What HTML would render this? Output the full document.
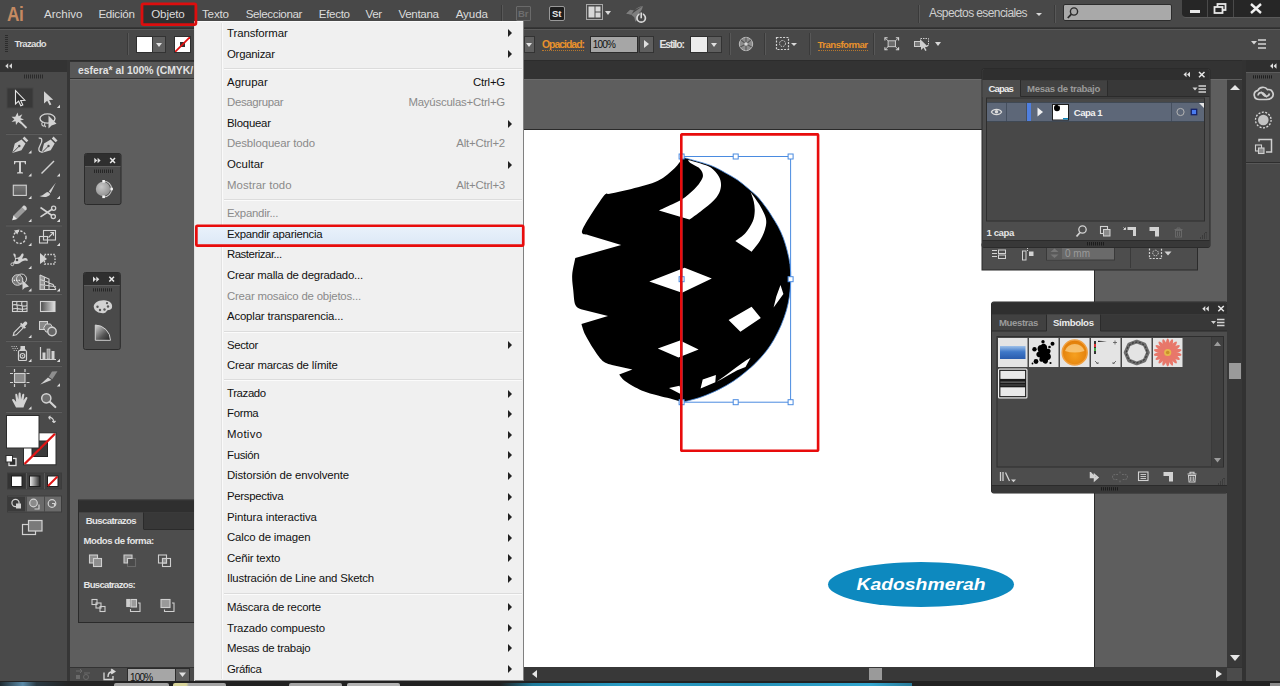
<!DOCTYPE html>
<html lang="es">
<head>
<meta charset="utf-8">
<title>Adobe Illustrator - Objeto &gt; Expandir apariencia</title>
<style>
html,body{margin:0;padding:0;}
body{width:1280px;height:686px;overflow:hidden;background:#5e5e5e;position:relative;font-family:"Liberation Sans",sans-serif;font-size:11px;color:#e6e6e6;}
.a{position:absolute;}
.t{position:absolute;white-space:nowrap;line-height:14px;}
/* bars */
#menubar{left:0;top:0;width:1280px;height:27px;background:#484848;}
#ctrlbar{left:0;top:29px;width:1280px;height:30.5px;background:#484848;border-top:1px solid #5a5a5a;box-sizing:border-box;}
#darkline1{left:0;top:27px;width:1280px;height:2px;background:linear-gradient(#3a3a3a,#2c2c2c);}
#darkline2{left:0;top:59.5px;width:1280px;height:2.5px;background:#2c2c2c;}
#tabstrip{left:70px;top:61px;width:1175px;height:18px;background:#333;}
#doctab{left:70px;top:62px;width:125px;height:16px;background:#575757;}
#canvas{left:70px;top:79px;width:1157px;height:588px;box-shadow:inset 0 1px 0 #6a6a6a;background:#5e5e5e;}
#artboard{left:520px;top:130px;width:574px;height:537px;background:#ffffff;box-shadow:0 -1px 0 #2a2a2a,1px 0 0 #2a2a2a;}
#tools{left:0;top:60px;width:67px;height:626px;background:#4a4a4a;}
#toolshead{left:0;top:60px;width:67px;height:12px;background:#333;}
#toolgap{left:67px;top:60px;width:3px;height:626px;background:#363636;}
.mb{color:#dcdcdc;font-size:11.6px;top:7px;}
/* menu */
#menu{left:194px;top:21px;width:330px;height:660px;background:#f0f0f0;box-shadow:inset -1px 0 0 #808080,inset 0 1px 0 #fbfbfb,inset 1px 0 0 #e4e4e4,inset 0 -1px 0 #8a8a8a;}
#menu .gut{left:27px;top:2px;width:1px;height:656px;background:#e2e2e2;border-right:1px solid #fafafa;}
.mi{position:absolute;left:33px;white-space:nowrap;color:#111;font-size:11.4px;line-height:14px;letter-spacing:-0.2px;}
.mi.d{color:#8a8a8a;}
.sc{position:absolute;right:19px;white-space:nowrap;color:#111;font-size:11.4px;line-height:14px;letter-spacing:-0.2px;}
.sc.d{color:#8a8a8a;}
.sep{position:absolute;left:30px;width:298px;height:1px;background:#dcdcdc;border-bottom:1px solid #fbfbfb;}
.arr{position:absolute;left:314px;width:0;height:0;border-left:4px solid #222;border-top:4px solid transparent;border-bottom:4px solid transparent;}
#hl{left:2px;width:327px;height:21px;background:linear-gradient(#eaf2fb,#dce8f6);border-radius:2px;}

.ddb{position:absolute;background:#5f5f5f;border:1px solid #333;box-sizing:border-box;}
.ddb:after{content:"";position:absolute;left:50%;top:50%;margin:-2px 0 0 -3.5px;border-top:4px solid #e0e0e0;border-left:3.5px solid transparent;border-right:3.5px solid transparent;}
.vsep{position:absolute;width:1px;background:#3a3a3a;border-right:1px solid #585858;}
.or{color:#e8922c;}
.dot{border-bottom:1px dotted #b9782e;}
.tri-d{position:absolute;width:0;height:0;border-top:4px solid #d8d8d8;border-left:3.5px solid transparent;border-right:3.5px solid transparent;}
</style>
</head>
<body>
<div class="a" id="canvas"></div>
<div class="a" id="artboard"></div>
<div class="a" id="menubar"></div>
<div class="a" id="darkline1"></div>
<div class="a" id="ctrlbar"></div>
<div class="a" id="darkline2"></div>
<div class="a" id="tabstrip"></div>
<div class="a" id="doctab"></div>
<div class="a" id="tools"></div>
<div class="a" id="toolshead"></div>
<div class="a" id="toolgap"></div>
<div class="a" style="left:1246px;top:60px;width:34px;height:626px;background:#484848;"></div>

<!--MENUBAR-->
<svg class="a" style="left:138px;top:0px" width="62" height="28"><rect x="4.00" y="3.90" width="53.90" height="20.70" rx="1.5" fill="#303030" stroke="none" stroke-width="2.8"/></svg>
<div class="t" style="left:7px;top:3px;font-size:20px;line-height:22px;font-weight:bold;color:#c58a62;letter-spacing:-0.5px;transform:scaleX(.86);transform-origin:0 0;">Ai</div>
<div class="t mb" style="left:44.0px;letter-spacing:-0.02px;">Archivo</div>
<div class="t mb" style="left:98.4px;letter-spacing:-0.26px;">Edición</div>
<div class="t mb" style="left:151.2px;letter-spacing:-0.11px;">Objeto</div>
<div class="t mb" style="left:202.0px;letter-spacing:-0.18px;">Texto</div>
<div class="t mb" style="left:245.7px;letter-spacing:-0.39px;">Seleccionar</div>
<div class="t mb" style="left:318.8px;letter-spacing:-0.33px;">Efecto</div>
<div class="t mb" style="left:365.5px;letter-spacing:-0.37px;">Ver</div>
<div class="t mb" style="left:398.4px;letter-spacing:-0.32px;">Ventana</div>
<div class="t mb" style="left:455.7px;letter-spacing:-0.11px;">Ayuda</div>
<div class="a" style="left:516px;top:6px;width:15px;height:15px;box-sizing:border-box;border:1px solid #6a6a6a;border-radius:1px;background:#4a4a4a;"></div>
<div class="t" style="left:518px;top:7px;font-size:9.5px;line-height:13px;font-weight:bold;color:#6e6e6e;">Br</div>
<div class="a" style="left:549px;top:6px;width:16px;height:15px;box-sizing:border-box;border:1px solid #9a9a9a;border-radius:2px;background:#1e1e1e;"></div>
<div class="t" style="left:552px;top:7px;font-size:9.5px;line-height:13px;font-weight:bold;color:#e8e8e8;">St</div>
<svg class="a" style="left:586px;top:4px" width="18" height="17" viewBox="0 0 18 17"><rect x=".5" y=".5" width="16" height="15" fill="#4a4a4a" stroke="#a8a8a8"/><rect x="2.5" y="2.5" width="6" height="11" fill="#d8d8d8"/><rect x="9.5" y="2.5" width="5" height="5" fill="#d8d8d8"/><rect x="9.5" y="8.5" width="5" height="5" fill="#d8d8d8"/></svg>
<div class="tri-d" style="left:605px;top:11px"></div>
<svg class="a" style="left:624px;top:2px" width="26" height="24" viewBox="624 2 26 24"><path d="M642.800 6 C639 6.300 634 9.500 631 14.500 L626.300 13.500 L630 10 L633 10.800 M631 14.500 L634.500 17.500 C639 14.500 642.300 10.500 642.800 6 Z" fill="#7e7e7e"/><path d="M626.300 13.800 L630.500 9.800 L633.500 10.600 L631 14.600 Z M634.300 17.300 L635.300 21.800 L638.500 18.500 L638 14.500 Z" fill="#7e7e7e"/><circle cx="641.200" cy="18" r="4.200" fill="#484848" stroke="#dadada" stroke-width="1.700"/><rect x="639.600" y="11.800" width="3.200" height="6.800" fill="#484848"/><rect x="640.400" y="12.500" width="1.600" height="5.800" fill="#dadada"/></svg>
<div class="vsep" style="left:501px;top:5px;height:18px"></div>
<div class="vsep" style="left:918px;top:5px;height:18px"></div>
<div class="t" style="left:929.0px;top:6px;font-size:12px;color:#cfcfcf;letter-spacing:-0.60px;">Aspectos esenciales</div>
<div class="tri-d" style="left:1036px;top:13px;border-top-width:3.5px;border-left-width:3px;border-right-width:3px;"></div>
<div class="vsep" style="left:1054px;top:5px;height:18px"></div>
<div class="a" style="left:1063px;top:4px;width:109px;height:17px;box-sizing:border-box;background:#a9a9a9;border:1px solid #2c2c2c;border-radius:2px;"></div>
<svg class="a" style="left:1066px;top:6px" width="14" height="14" viewBox="0 0 14 14"><circle cx="8" cy="5.5" r="3.6" fill="none" stroke="#2a2a2a" stroke-width="1.4"/><path d="M5.4 8.2 L1.8 12" stroke="#2a2a2a" stroke-width="1.8"/></svg>
<div class="a" style="left:1182px;top:0;width:98px;height:17px;background:#262626;border-radius:0 0 0 4px;border-bottom:1px solid #5a5a5a;"></div>
<div class="a" style="left:1207px;top:0;width:1px;height:17px;background:#4a4a4a;"></div>
<div class="a" style="left:1233px;top:0;width:1px;height:17px;background:#4a4a4a;"></div>
<div class="a" style="left:1190px;top:10px;width:10px;height:3px;background:#e8e8e8;"></div>
<svg class="a" style="left:1213px;top:2px" width="14" height="13" viewBox="0 0 14 13"><rect x="4.5" y="2" width="8" height="6" fill="none" stroke="#e8e8e8" stroke-width="1.8"/><rect x="1.5" y="5" width="8" height="6" fill="#262626" stroke="#e8e8e8" stroke-width="1.8"/></svg>
<svg class="a" style="left:1249px;top:3px" width="14" height="11" viewBox="0 0 14 11"><path d="M2 1 L12 10 M12 1 L2 10" stroke="#f0f0f0" stroke-width="2.4"/></svg>

<div class="t" style="left:78.0px;top:63.500px;font-size:10.400px;font-weight:bold;color:#e2e2e2;letter-spacing:-0.02px;">esfera* al 100% (CMYK/</div>
<!--CTRLBAR-->
<div class="a" style="left:5px;top:35px;width:3px;height:18px;background:repeating-linear-gradient(#2c2c2c 0 1px,transparent 1px 2px);"></div>
<div class="t" style="left:14.6px;top:37px;font-size:9.6px;font-weight:bold;color:#dedede;letter-spacing:-0.69px;">Trazado</div>
<div class="vsep" style="left:127px;top:33px;height:22px"></div>
<div class="a" style="left:136px;top:36px;width:17px;height:17px;box-sizing:border-box;background:#fff;border:1px solid #2f2f2f;"></div>
<div class="ddb" style="left:152px;top:36px;width:14px;height:17px;"></div>
<div class="a" style="left:174px;top:36px;width:17px;height:17px;box-sizing:border-box;background:#fff;border:1px solid #2f2f2f;overflow:hidden;"><svg width="15" height="15" viewBox="0 0 15 15" style="display:block"><rect x="5" y="5" width="5" height="5" fill="#333"/><path d="M0 15 L15 0" stroke="#e01010" stroke-width="1.8"/></svg></div>
<div class="ddb" style="left:524px;top:36px;width:11px;height:17px;"></div>
<div class="t or" style="left:542.0px;top:38px;font-size:10.4px;font-weight:bold;letter-spacing:-0.98px;"><span class="dot">Opacidad:</span></div>
<div class="a" style="left:590px;top:36px;width:48px;height:17px;box-sizing:border-box;background:#a6a6a6;border:1px solid #2c2c2c;"></div>
<div class="t" style="left:592.7px;top:38px;font-size:10px;color:#111;letter-spacing:-0.75px;">100%</div>
<div class="a" style="left:639px;top:36px;width:15px;height:17px;box-sizing:border-box;background:#5f5f5f;border:1px solid #333;"></div>
<div class="a" style="left:644px;top:40px;width:0;height:0;border-left:5px solid #e0e0e0;border-top:4.5px solid transparent;border-bottom:4.5px solid transparent;"></div>
<div class="t" style="left:659.4px;top:38px;font-size:10.4px;font-weight:bold;color:#e2e2e2;letter-spacing:-1.02px;">Estilo:</div>
<div class="a" style="left:690px;top:36px;width:18px;height:17px;box-sizing:border-box;background:#ececec;border:1px solid #2f2f2f;"></div>
<div class="ddb" style="left:707px;top:36px;width:15px;height:17px;"></div>
<div class="vsep" style="left:729px;top:33px;height:22px"></div>
<svg class="a" style="left:738px;top:36px" width="16" height="16" viewBox="0 0 16 16"><circle cx="8" cy="8" r="6.7" fill="#8c8c8c" stroke="#bdbdbd" stroke-width="1"/><path d="M8 8 L8 1.5 M8 8 L2.3 11 M8 8 L13.7 11 M8 8 L3 4 M8 8 L13 4 M8 8 L8 14.5" stroke="#565656" stroke-width="1.1"/><circle cx="8" cy="8" r="1.8" fill="#d8d8d8"/></svg>
<div class="vsep" style="left:764px;top:33px;height:22px"></div>
<svg class="a" style="left:775px;top:36px" width="16" height="16" viewBox="0 0 16 16"><rect x="1.5" y="1.5" width="12" height="12" fill="none" stroke="#d4d4d4" stroke-width="1.2" stroke-dasharray="2 1.3"/><circle cx="7.5" cy="7.5" r="3" fill="none" stroke="#d4d4d4" stroke-width="1" stroke-dasharray="1.5 1"/></svg>
<div class="tri-d" style="left:791px;top:43px;border-top-width:3.5px;border-left-width:3.5px;border-right-width:3.5px;"></div>
<div class="vsep" style="left:809px;top:33px;height:22px"></div>
<div class="t or" style="left:817.6px;top:38px;font-size:9.6px;font-weight:bold;letter-spacing:-0.55px;"><span class="dot">Transformar</span></div>
<div class="vsep" style="left:873px;top:33px;height:22px"></div>
<svg class="a" style="left:884px;top:37px" width="15.500" height="13.500" viewBox="0 0 17 16" preserveAspectRatio="none"><rect x="4.5" y="4.5" width="8" height="7" fill="#6a6a6a" stroke="#d8d8d8" stroke-width="1"/><path d="M1 4 V1 H4 M13 1 H16 V4 M16 12 V15 H13 M4 15 H1 V12" fill="none" stroke="#d8d8d8" stroke-width="1.2"/><path d="M1.5 1.5 L4.5 4.5 M15.5 1.5 L12.5 4.5 M15.5 14.5 L12.5 11.5 M1.5 14.5 L4.5 11.5" stroke="#d8d8d8" stroke-width="1"/></svg>
<svg class="a" style="left:913px;top:36px" width="17" height="16" viewBox="0 0 17 16"><rect x="1.5" y="5.5" width="6" height="5" fill="#777" stroke="#cfcfcf"/><rect x="7.500" y="2.500" width="8" height="7" fill="none" stroke="#cfcfcf" stroke-dasharray="1.5 1"/><path d="M8 4 L8 14 L10.5 11.8 L12.3 15 L13.6 14.3 L11.9 11.2 L15 10.8 Z" fill="#cfcfcf"/></svg>
<div class="tri-d" style="left:935px;top:42px"></div>
<svg class="a" style="left:1251px;top:38px" width="16" height="12" viewBox="0 0 16 12"><path d="M0 3 L6 3 L3 6.500 Z" fill="#d4d4d4"/><path d="M7 2 H15 M7 6 H15 M7 10 H15" stroke="#d4d4d4" stroke-width="1.6"/></svg>

<!--TOOLS_S-->
<svg class="a" style="left:0;top:60px" width="67" height="490" viewBox="0 60 67 490">
<defs><linearGradient id="gh" x1="0" x2="1" y1="0" y2="0"><stop offset="0" stop-color="#4a4a4a"/><stop offset="1" stop-color="#e4e4e4"/></linearGradient>
<linearGradient id="gh2" x1="0" x2="1" y1="0" y2="0"><stop offset="0" stop-color="#f4f4f4"/><stop offset="1" stop-color="#2a2a2a"/></linearGradient>
<linearGradient id="gv" x1="0" x2="0" y1="0" y2="1"><stop offset="0" stop-color="#777"/><stop offset="1" stop-color="#5c5c5c"/></linearGradient></defs>
<path d="M8.2 63.2 L5.2 66 L8.2 68.800 Z M12 63.2 L9 66 L12 68.800 Z" fill="#d6d6d6"/>
<path d="M24.500 74.500 V78.500 M26.500 74.500 V78.500 M28.500 74.500 V78.500 M30.500 74.500 V78.500 M32.500 74.500 V78.500 M34.500 74.500 V78.500 M36.500 74.500 V78.500 M38.500 74.500 V78.500 M40.500 74.500 V78.500 M42.500 74.500 V78.500" stroke="#2a2a2a" stroke-width="1"/>
<rect x="7" y="88" width="26" height="20" fill="#383838" stroke="#454545" stroke-width="1"/>
<!-- selection -->
<path d="M15.500 90.500 L15.500 104 L18.600 101.200 L20.800 105.800 L22.800 104.900 L20.700 100.400 L24.800 100.200 Z" fill="#2e2e2e" stroke="#e6e6e6" stroke-width="1.1" stroke-linejoin="miter"/>
<!-- direct -->
<path d="M44 91.200 L44 103.500 L47.200 100.800 L49.600 105.300 L51.400 104.400 L49.100 99.900 L53.200 99.800 Z" fill="#d2d2d2"/>
<path d="M60 108 L60 104.8 L56.8 108 Z" fill="#dcdcdc"/>
<!-- wand -->
<path d="M17.500 112.500 L18.600 116.300 L22.300 114.300 L20.500 118 L24 119.500 L20.300 120.500 L21.500 124 L18.200 122 L16 125 L15.600 121.300 L11.600 122 L14.400 119.300 L11.500 116.800 L15.300 116.800 Z" fill="#d2d2d2"/>
<path d="M20 121.500 L26.500 128" stroke="#d2d2d2" stroke-width="1.8"/>
<!-- lasso -->
<ellipse cx="47.500" cy="118.500" rx="7.500" ry="4.600" fill="none" stroke="#d2d2d2" stroke-width="1.400"/>
<path d="M42.500 122 C41 124 42 126.500 44.500 126 M45 123 C44 124.500 45 126.500 46 127" fill="none" stroke="#d2d2d2" stroke-width="1.100"/>
<path d="M48.500 115.500 L48.500 128.500 L51.600 125.600 L56.500 123.800 Z" fill="#d2d2d2"/>
<path d="M6 133.500 H62" stroke="#474747" stroke-width="1"/><path d="M6 134.500 H62" stroke="#5c5c5c" stroke-width="1"/>
<!-- pen -->
<g fill="#d2d2d2"><path d="M12.300 153 L14.800 143.500 L21.500 139.500 L25.500 143.500 L21.500 150.200 Z"/><path d="M22.600 138.400 L24.400 136.600 L28.300 140.500 L26.500 142.300 Z"/></g>
<path d="M12.800 152.500 L19 146.300" stroke="#4a4a4a" stroke-width="1"/><circle cx="19.300" cy="146" r="1.200" fill="#4a4a4a"/>
<path d="M31.5 153.5 L31.5 150.3 L28.3 153.5 Z" fill="#dcdcdc"/>
<!-- curvature pen -->
<g fill="#d2d2d2"><path d="M41.500 153 L44 143.500 L50.700 139.500 L54.700 143.500 L50.700 150.200 Z"/><path d="M51.800 138.400 L53.600 136.600 L57.500 140.500 L55.700 142.300 Z"/></g>
<path d="M42 152.500 L48.200 146.300" stroke="#4a4a4a" stroke-width="1"/><circle cx="48.500" cy="146" r="1.200" fill="#4a4a4a"/>
<path d="M38.700 138.200 C42.500 137.500 42.500 141 40.500 144.500 C38 149 38 152.500 42.500 152" fill="none" stroke="#d2d2d2" stroke-width="1.300"/>
<!-- T -->
<path d="M14 161 H26 V164.300 H25 L24.400 162.300 H21 V172 L23 172.600 V173.600 H17 V172.600 L19 172 V162.300 H15.600 L15 164.300 H14 Z" fill="#d2d2d2"/>
<path d="M31.5 176.5 L31.5 173.3 L28.3 176.5 Z" fill="#dcdcdc"/>
<path d="M41.500 173.500 L54 161" stroke="#d2d2d2" stroke-width="1.500"/>
<path d="M60 176.5 L60 173.3 L56.8 176.5 Z" fill="#dcdcdc"/>
<!-- rect -->
<rect x="13.300" y="185.200" width="13" height="10.200" fill="url(#gv)" stroke="#d2d2d2" stroke-width="1.100"/>
<path d="M31.5 199 L31.5 195.8 L28.3 199 Z" fill="#dcdcdc"/>
<!-- brush -->
<path d="M55.800 182.800 L48.800 191.500 L50.600 193 Z" fill="#d2d2d2"/>
<path d="M48 192 C45 192 44.500 195.500 39.500 196 C43 197.800 48.500 197.500 50.300 194 Z" fill="#d2d2d2"/>
<path d="M60 199 L60 195.8 L56.8 199 Z" fill="#dcdcdc"/>
<!-- pencil -->
<path d="M12.300 220.300 L13.500 215.600 L21.800 207.300 L25.300 210.800 L17 219.100 Z" fill="#9a9a9a"/>
<path d="M21.800 207.300 L23.300 205.800 C24.500 204.800 27.500 207.600 26.600 209.200 L25.300 210.800 Z" fill="#d2d2d2"/>
<path d="M12.300 220.300 L13.500 215.600 L17 219.100 Z" fill="#e8e8e8"/>
<path d="M31.5 222 L31.5 218.8 L28.3 222 Z" fill="#dcdcdc"/>
<!-- scissors -->
<path d="M40.500 207.500 L52 215.500 M40.500 216.800 L52.500 209" stroke="#d2d2d2" stroke-width="1.600"/>
<circle cx="53.600" cy="208.300" r="2.100" fill="none" stroke="#d2d2d2" stroke-width="1.300"/><circle cx="53.300" cy="216.600" r="2.100" fill="none" stroke="#d2d2d2" stroke-width="1.300"/>
<path d="M60 222 L60 218.8 L56.8 222 Z" fill="#dcdcdc"/>
<path d="M6 225 H62" stroke="#474747" stroke-width="1"/><path d="M6 226 H62" stroke="#5c5c5c" stroke-width="1"/>
<!-- rotate -->
<circle cx="19.700" cy="237.200" r="6.300" fill="none" stroke="#d2d2d2" stroke-width="1.400" stroke-dasharray="2.200 1.500"/>
<path d="M14 230.500 L19.500 229.500 L17.300 234.500 Z" fill="#d2d2d2"/>
<path d="M31.5 246 L31.5 242.8 L28.3 246 Z" fill="#dcdcdc"/>
<!-- scale -->
<rect x="43.500" y="230.500" width="12" height="9.500" fill="none" stroke="#d2d2d2" stroke-width="1.100"/>
<rect x="39.500" y="236.500" width="8" height="6.500" fill="none" stroke="#d2d2d2" stroke-width="1.100"/>
<path d="M48.500 237.500 L53.500 232.500 M50.300 232.500 H53.500 V235.700" stroke="#d2d2d2" stroke-width="1.100" fill="none"/>
<path d="M60 246 L60 242.8 L56.8 246 Z" fill="#dcdcdc"/>
<!-- width/warp -->
<path d="M13.500 253.500 C16 253 16 256 15.500 258 C18 258 20 257 21 255 C22 253 24 253 23.500 255.500 C23 257 22 258 22.500 259 C25 257 28.500 258 27.500 261 C25 259.500 22 261 20 263 C17.500 265 14 264 13 262.500 C15 261 15.500 259 14.500 257 C14 255.500 13 255 13.500 253.500 Z" fill="#d2d2d2"/>
<circle cx="12.300" cy="264.300" r="1.400" fill="none" stroke="#d2d2d2" stroke-width="0.900"/><circle cx="17" cy="260" r="1.300" fill="#4a4a4a"/>
<path d="M31.5 269 L31.5 265.8 L28.3 269 Z" fill="#dcdcdc"/>
<!-- free transform -->
<path d="M40 253 L40 264 L47 259 Z" fill="#d2d2d2"/>
<rect x="44.500" y="254.500" width="10.500" height="9.500" fill="none" stroke="#d2d2d2" stroke-width="1.300" stroke-dasharray="1.600 1.300"/>
<!-- shape builder -->
<circle cx="17.500" cy="280" r="5.300" fill="#7a7a7a" stroke="#d2d2d2" stroke-width="1"/><circle cx="21.500" cy="279" r="5" fill="none" stroke="#d2d2d2" stroke-width="1"/>
<path d="M13.800 280.300 h1.200 m1.200 0 h1.200 m1.200 0 h1.200" stroke="#efefef" stroke-width="1.300"/>
<path d="M22.500 280.500 L22.500 290 L24.800 287.800 L29 286.500 Z" fill="#d2d2d2"/>
<path d="M31.5 291.5 L31.5 288.3 L28.3 291.5 Z" fill="#dcdcdc"/>
<!-- perspective grid -->
<path d="M40 275 L40 289.500 L56 289.500 M44.500 277 V289.500 M49 279 V289.500 M40 279.500 L49 282.500 M40 284.500 L56 286.800 M40 275 L49 279 V283 L53 284.500 L56 289.500" fill="none" stroke="#d2d2d2" stroke-width="1.100"/>
<path d="M40 275 L44.500 277 V289 H40 Z" fill="#d2d2d2" opacity=".55"/>
<path d="M60 291.5 L60 288.3 L56.8 291.5 Z" fill="#dcdcdc"/>
<path d="M6 293.500 H62" stroke="#474747" stroke-width="1"/><path d="M6 294.500 H62" stroke="#5c5c5c" stroke-width="1"/>
<!-- mesh -->
<rect x="12.500" y="301.500" width="14.500" height="10" fill="#4a4a4a" stroke="#d2d2d2" stroke-width="1.100"/>
<path d="M12.500 305 C17 303 22 308 27 305.500 M12.500 309 C17 307 21 311 27 308.500 M17 301.500 C15.500 305 19 308 17 311.500 M22 301.500 C20.500 305 24 308 22.300 311.500" fill="none" stroke="#d2d2d2" stroke-width="1.100"/>
<!-- gradient -->
<rect x="40.500" y="301.500" width="14.500" height="10" fill="url(#gh)" stroke="#d2d2d2" stroke-width="1.100"/>
<!-- eyedropper -->
<path d="M13.300 335.500 L14 332.500 L21 325.500 L23.300 327.800 L16.300 334.800 Z" fill="none" stroke="#d2d2d2" stroke-width="1.200"/>
<path d="M20 324 L24.800 328.800 L26 327.600 L24.800 326.400 L27 324.200 C28.200 322.800 26 320.600 24.600 321.800 L22.400 324 L21.200 322.800 Z" fill="#d2d2d2"/>
<path d="M31.5 338 L31.5 334.8 L28.3 338 Z" fill="#dcdcdc"/>
<!-- blend -->
<rect x="39.500" y="321.500" width="8" height="8" fill="#8a8a8a" stroke="#d2d2d2" stroke-width="1"/>
<path d="M46 324 L50.500 324 L53 328 L50.500 332 L46 332 L43.600 328 Z" fill="#777" stroke="#d2d2d2" stroke-width="1"/>
<circle cx="52" cy="331.500" r="4.200" fill="#666" stroke="#d2d2d2" stroke-width="1.400"/>
<path d="M6 340.500 H62" stroke="#474747" stroke-width="1"/><path d="M6 341.500 H62" stroke="#5c5c5c" stroke-width="1"/>
<!-- spray -->
<rect x="18.500" y="350.500" width="8" height="10" rx="1" fill="none" stroke="#d2d2d2" stroke-width="1.200"/>
<rect x="20.500" y="346" width="4.500" height="3.500" fill="#d2d2d2"/><path d="M19.500 350 L21 348.500 H24.500 L26 350 Z" fill="#d2d2d2"/>
<circle cx="22.500" cy="355.800" r="2.300" fill="none" stroke="#d2d2d2" stroke-width="1.100"/><circle cx="22.500" cy="355.800" r="0.800" fill="#d2d2d2"/>
<path d="M11.500 346.500 h1 m1.200 0 h1 m1.200 0 h1 M12.500 348.500 h1 m1.200 0 h1 m1.200 0 h1 M13.700 350.500 h1 m1.200 0 h1" stroke="#d2d2d2" stroke-width="0.900"/>
<path d="M31.5 362 L31.5 358.8 L28.3 362 Z" fill="#dcdcdc"/>
<!-- graph -->
<path d="M40.500 347 V359.500 H56" fill="none" stroke="#d2d2d2" stroke-width="1.200"/>
<rect x="42.500" y="352.500" width="3" height="6.500" fill="#d2d2d2"/><rect x="47" y="349" width="3" height="10" fill="#9a9a9a" stroke="#d2d2d2" stroke-width=".6"/><rect x="51.500" y="351" width="3" height="8" fill="#d2d2d2"/>
<path d="M60 362 L60 358.8 L56.8 362 Z" fill="#dcdcdc"/>
<path d="M6 365.500 H62" stroke="#474747" stroke-width="1"/><path d="M6 366.500 H62" stroke="#5c5c5c" stroke-width="1"/>
<!-- artboard -->
<rect x="14.500" y="373.500" width="10.500" height="9" fill="#8a8a8a" stroke="#d2d2d2" stroke-width="1.100"/>
<path d="M14.500 369 V372 M25 369 V372 M14.500 384 V387 M25 384 V387 M10 373.500 H13 M10 382.500 H13 M26.500 373.500 H29.500 M26.500 382.500 H29.500" stroke="#d2d2d2" stroke-width="1.200"/>
<!-- slice -->
<path d="M40.300 384.500 L48 377.500 L51.500 380 Z" fill="#d2d2d2"/><path d="M48.800 376.800 L52 371.500 L57.500 371.300 L52.300 379.300 Z" fill="#8e8e8e"/>
<path d="M60 386.5 L60 383.3 L56.8 386.5 Z" fill="#dcdcdc"/>
<!-- hand -->
<path d="M16 407.500 L12.300 400.500 C11.600 399 13.300 398.300 14.200 399.500 L16.200 402 L15.300 395 C15.100 393.500 17 393.300 17.300 394.700 L18.300 399.500 L18.600 393.500 C18.700 392 20.600 392 20.700 393.500 L21 399.500 L22.300 394.500 C22.700 393.100 24.500 393.500 24.300 395 L23.500 400.500 L25.500 397.500 C26.400 396.300 27.900 397.200 27.300 398.500 L24.500 404.500 L23.500 407.500 Z" fill="#d2d2d2"/>
<path d="M31.5 409.5 L31.5 406.3 L28.3 409.5 Z" fill="#dcdcdc"/>
<!-- zoom -->
<circle cx="46.300" cy="398.300" r="4.600" fill="#6e6e6e" stroke="#d2d2d2" stroke-width="1.500"/><path d="M49.800 401.800 L55.300 407" stroke="#d2d2d2" stroke-width="2.200" stroke-linecap="round"/>
<path d="M6 411.500 H62" stroke="#474747" stroke-width="1"/><path d="M6 412.500 H62" stroke="#5c5c5c" stroke-width="1"/>
<!-- fill/stroke -->
<rect x="23.500" y="432.800" width="32.500" height="32" fill="#fff" stroke="#2c2c2c" stroke-width="1"/>
<rect x="32" y="441" width="15.500" height="15.500" fill="#3a3a3a" stroke="#222" stroke-width="1"/>
<path d="M24.500 464 L55 433.800" stroke="#e01515" stroke-width="2.300"/>
<rect x="6.500" y="415.500" width="32.500" height="32.500" fill="#fff" stroke="#2c2c2c" stroke-width="1"/>
<path d="M48.500 417.500 C51.500 417 54 419 54 422.500 M48.500 417.500 L50.500 416 M48.500 417.500 L50.300 419.500 M54 422.500 L52.300 421 M54 422.500 L55.600 421" fill="none" stroke="#d2d2d2" stroke-width="1.100"/>
<rect x="9" y="458.500" width="7" height="7" fill="#2c2c2c" stroke="#e0e0e0" stroke-width="1.300"/><rect x="6" y="455.500" width="6.500" height="6.500" fill="#fff" stroke="#2c2c2c" stroke-width="1"/>
<!-- color buttons -->
<rect x="7.500" y="473" width="54" height="16" fill="#404040" stroke="#3c3c3c"/>
<rect x="8" y="473.500" width="17.500" height="15" fill="#333"/>
<rect x="26" y="473" width="1" height="16" fill="#585858"/><rect x="44" y="473" width="1" height="16" fill="#585858"/>
<rect x="11.500" y="476" width="10.500" height="10.500" fill="#fff" stroke="#1e1e1e"/>
<rect x="29.500" y="476" width="10.500" height="10.500" fill="url(#gh2)" stroke="#1e1e1e"/>
<rect x="47.500" y="476" width="10.500" height="10.500" fill="#fff" stroke="#1e1e1e"/><path d="M48 486 L57.500 476.500" stroke="#e01515" stroke-width="2"/>
<!-- draw mode -->
<rect x="7.500" y="496" width="54" height="16" fill="#6a6a6a" stroke="#3c3c3c"/>
<rect x="8" y="496.500" width="17.500" height="15" fill="#3a3a3a"/>
<rect x="26" y="496" width="1" height="16" fill="#4a4a4a"/><rect x="44" y="496" width="1" height="16" fill="#4a4a4a"/>
<circle cx="15.500" cy="503" r="3.600" fill="none" stroke="#d2d2d2" stroke-width="1.200"/><rect x="16" y="503.500" width="5" height="5" fill="#d2d2d2"/>
<circle cx="33.500" cy="503" r="3.800" fill="#8a8a8a" stroke="#d2d2d2" stroke-width="1.200"/><path d="M34.500 509 H39 V504.500" fill="none" stroke="#d2d2d2" stroke-width="1.200"/>
<circle cx="52" cy="503.500" r="3.800" fill="none" stroke="#d2d2d2" stroke-width="1.200"/><path d="M52 503.500 H54.500 V506" fill="none" stroke="#d2d2d2" stroke-width="1.200"/>
<!-- screen mode -->
<rect x="22.500" y="524.500" width="13" height="10" fill="#4a4a4a" stroke="#d2d2d2" stroke-width="1.200"/>
<rect x="28.500" y="520.500" width="13.500" height="10.500" fill="#7a7a7a" stroke="#d2d2d2" stroke-width="1.200"/>
</svg>
<!--TOOLS_E-->
<!--FLOAT_S-->
<svg class="a" style="left:70px;top:140px" width="130" height="500" viewBox="70 140 130 500">
<defs><radialGradient id="rg1" cx=".4" cy=".35" r=".7"><stop offset="0" stop-color="#c8c8c8"/><stop offset="1" stop-color="#8e8e8e"/></radialGradient>
<linearGradient id="qg" x1="0" x2="1" y1="0" y2="1"><stop offset="0" stop-color="#d8d8d8"/><stop offset=".6" stop-color="#555"/><stop offset="1" stop-color="#222"/></linearGradient></defs>
<!-- float 1 -->
<rect x="84.500" y="153.500" width="36.500" height="51" rx="2" fill="#4a4a4a" stroke="#2b2b2b"/>
<path d="M85 156 Q85 154 87 154 H118.500 Q120.500 154 120.500 156 V166 H85 Z" fill="#2f2f2f"/>
<path d="M85 166.500 H120.500" stroke="#5e5e5e"/>
<path d="M94.300 157.800 L97.300 160.500 L94.300 163.200 Z M97.600 157.800 L100.600 160.500 L97.600 163.200 Z" fill="#e0e0e0"/>
<path d="M110.200 158 L115 163 M115 158 L110.200 163" stroke="#e8e8e8" stroke-width="1.500"/>
<path d="M94.5 169.5 V173 M96.5 169.5 V173 M98.5 169.5 V173 M100.5 169.5 V173 M102.5 169.5 V173 M104.5 169.5 V173 M106.5 169.5 V173 M108.5 169.5 V173 M110.5 169.5 V173 M112.5 169.5 V173" stroke="#262626" stroke-width="1"/>
<circle cx="103" cy="189" r="7.200" fill="url(#rg1)"/>
<path d="M103.600 181 A8 8 0 0 1 103.600 197" fill="none" stroke="#c8c8c8" stroke-width="1.100"/>
<rect x="102.300" y="180" width="2.600" height="2.600" fill="#f4f4f4"/><rect x="110.300" y="187.700" width="2.600" height="2.600" fill="#f4f4f4"/><rect x="102.300" y="195.500" width="2.600" height="2.600" fill="#f4f4f4"/>
<!-- float 2 -->
<rect x="83.500" y="272.500" width="36.800" height="77" rx="2" fill="#4a4a4a" stroke="#2b2b2b"/>
<path d="M84 275 Q84 273 86 273 H117.800 Q119.800 273 119.800 275 V285 H84 Z" fill="#2f2f2f"/>
<path d="M84 285.500 H119.800" stroke="#5e5e5e"/>
<path d="M93 276.500 L96 279.200 L93 281.900 Z M96.300 276.500 L99.300 279.200 L96.300 281.900 Z" fill="#e0e0e0"/>
<path d="M109.300 276.800 L114 281.600 M114 276.800 L109.300 281.600" stroke="#e8e8e8" stroke-width="1.500"/>
<path d="M93.5 288.3 V291.5 M95.5 288.3 V291.5 M97.5 288.3 V291.5 M99.5 288.3 V291.5 M101.5 288.3 V291.5 M103.5 288.3 V291.5 M105.5 288.3 V291.5 M107.5 288.3 V291.5 M109.5 288.3 V291.5 M111.5 288.3 V291.5" stroke="#262626" stroke-width="1"/>
<path d="M94 308 C92.500 303.500 98 300 104 300.200 C109.500 300.400 113 303.500 112 307.500 C111.200 310.500 108.500 309.500 107.200 310.600 C106 311.600 106.500 313 103.500 313.200 C99 313.400 95 311.500 94 308 Z" fill="#d2d2d2"/>
<circle cx="97.500" cy="306.800" r="1.200" fill="#555"/><circle cx="100" cy="310" r="1.200" fill="#555"/><circle cx="104.500" cy="309.500" r="1.200" fill="#555"/><circle cx="108" cy="306.500" r="1.200" fill="#555"/><circle cx="107" cy="303.200" r="1.100" fill="#555"/>
<path d="M95.300 325 A15.500 15.500 0 0 1 110.500 340.300 L95.300 340.300 Z" fill="url(#qg)" stroke="#cfcfcf" stroke-width="1"/>
<!-- Buscatrazos -->
<rect x="78.500" y="500" width="125" height="122.500" fill="#4d4d4d" stroke="#2b2b2b"/>
<rect x="79" y="500.500" width="124" height="12" fill="#2f2f2f"/>
<rect x="79" y="512.500" width="124" height="16.500" fill="#383838"/>
<rect x="79" y="512.500" width="64.500" height="17" fill="#4d4d4d"/>
<path d="M143.500 512.500 V529" stroke="#2b2b2b"/><path d="M143.500 529.500 H203" stroke="#2b2b2b"/>
<!-- icons row 1 -->
<g stroke="#cfcfcf" stroke-width="1.100">
<rect x="89.500" y="555" width="8" height="8" fill="#8e8e8e"/><rect x="93.500" y="558.500" width="8" height="8" fill="#8e8e8e"/>
<rect x="127.500" y="558.500" width="8" height="8" fill="#4a4a4a" stroke="#6a6a6a"/><path d="M124 563 V555 H132 V558.500 H127.500 V563 Z" fill="#8e8e8e"/>
<rect x="158.500" y="555" width="8" height="8" fill="none"/><rect x="162.500" y="558.500" width="8" height="8" fill="none"/><rect x="162.500" y="558.500" width="4" height="4.500" fill="#8e8e8e"/>
</g>
<g stroke="#cfcfcf" stroke-width="1.100">
<rect x="92" y="599.500" width="5" height="5" fill="none"/><rect x="96" y="603" width="5" height="5" fill="none"/><rect x="100" y="606.500" width="5" height="5" fill="none"/>
<rect x="126.800" y="599.500" width="3" height="3" fill="#cfcfcf"/><rect x="126.800" y="603.500" width="3" height="3" fill="#cfcfcf"/><rect x="131" y="599.500" width="5.500" height="7.500" fill="#9a9a9a"/><path d="M138 603 H140 V611.500 H130.500 V609" fill="none"/>
<rect x="161" y="599.500" width="9" height="8" fill="#9a9a9a"/><path d="M172 603 H174 V611.500 H164.500 V609.500" fill="none"/>
</g>
</svg>
<div class="t" style="left:85.7px;top:514px;font-size:9.6px;font-weight:bold;color:#e4e4e4;letter-spacing:-0.61px;">Buscatrazos</div>
<div class="t" style="left:83.5px;top:534px;font-size:9.6px;font-weight:bold;color:#e4e4e4;letter-spacing:-0.47px;">Modos de forma:</div>
<div class="t" style="left:83.5px;top:578px;font-size:9.6px;font-weight:bold;color:#e4e4e4;letter-spacing:-0.73px;">Buscatrazos:</div>
<!--FLOAT_E-->
<!--ART_S-->
<svg class="a" style="left:560px;top:120px" width="470" height="500" viewBox="560 120 470 500">
<path d="M683.0 157.5 C684.2 157.8 685.8 158.1 690.4 159.4 C695.0 160.7 705.0 163.3 710.8 165.5 C716.6 167.7 720.7 170.3 725.1 172.7 C729.5 175.1 733.5 177.2 737.3 179.8 C741.0 182.4 744.2 185.1 747.6 188.0 C751.0 190.9 754.8 193.9 757.8 197.1 C760.8 200.3 763.5 204.1 765.9 207.3 C768.3 210.5 770.0 213.3 772.0 216.5 C774.0 219.7 776.3 223.1 778.2 226.7 C780.1 230.3 781.8 233.9 783.3 238.0 C784.8 242.1 786.2 246.8 787.3 251.2 C788.4 255.6 789.4 259.7 790.0 264.5 C790.6 269.3 790.9 274.7 790.8 280.0 C790.7 285.3 790.1 291.4 789.4 296.5 C788.6 301.6 787.7 306.1 786.3 310.8 C784.9 315.6 783.2 320.2 781.2 325.0 C779.2 329.8 776.5 335.0 774.0 339.4 C771.5 343.8 768.9 347.7 765.9 351.6 C762.9 355.5 759.1 359.5 755.7 362.9 C752.3 366.3 749.2 368.9 745.5 372.0 C741.8 375.1 737.7 378.3 733.3 381.2 C728.9 384.1 724.1 386.8 719.0 389.4 C713.9 391.9 707.5 394.7 702.7 396.5 C697.9 398.3 693.8 399.2 690.4 400.2 C687.0 401.1 683.6 401.9 682.2 402.2 C680.2 401.6 674.2 399.7 670.2 398.6 C666.2 397.5 662.8 396.9 658.0 395.5 C653.2 394.1 647.1 392.8 641.6 390.4 C636.1 388.0 629.0 383.8 625.3 381.2 C621.6 378.6 620.2 375.6 619.2 374.5 L632.4 369.4 L612.0 365.0 C610.6 364.5 606.4 363.7 603.9 361.8 C601.4 359.9 599.8 358.1 596.7 353.7 C593.6 349.3 588.0 340.2 585.5 335.3 C583.0 330.4 582.1 325.9 581.4 324.0 L608.0 316.0 L581.0 309.3 C580.0 308.5 576.6 307.9 575.3 304.7 C574.0 301.5 573.8 295.3 573.3 290.4 C572.8 285.4 571.9 280.4 572.2 275.0 C572.5 269.6 574.8 260.8 575.3 258.0 L621.2 245.0 L588.0 235.0 C587.1 234.1 579.9 236.1 582.4 229.8 C584.9 223.5 598.6 203.0 602.9 197.0 C607.2 191.0 607.1 194.5 608.0 194.0 C611.9 193.2 623.1 191.2 631.4 189.0 C639.7 186.8 650.9 184.2 658.0 180.8 C665.1 177.4 670.1 172.5 674.3 168.6 C678.5 164.7 681.5 159.3 683.0 157.5 Z" fill="#000"/>
<path d="M688.0 160.0 C690.1 160.6 696.8 162.2 700.6 163.5 C704.4 164.8 707.7 165.4 710.8 167.6 C713.9 169.8 717.3 173.6 719.0 176.7 C720.7 179.8 721.2 182.8 721.0 185.9 C720.8 189.0 719.7 192.2 718.0 195.1 C716.3 198.0 713.7 200.6 710.8 203.3 C707.9 206.0 704.2 208.7 700.6 211.4 C697.0 214.1 691.3 218.2 689.4 219.6 L659.0 210.4 C660.8 209.6 666.1 207.2 670.0 205.3 C673.9 203.4 678.1 201.9 682.2 199.2 C686.3 196.5 691.3 192.2 694.5 189.0 C697.7 185.8 700.2 182.4 701.6 179.8 C703.0 177.2 703.2 175.7 702.7 173.7 C702.2 171.7 700.7 169.4 698.6 167.6 C696.5 165.8 692.2 164.2 690.4 162.9 C688.6 161.6 688.4 160.5 688.0 160.0 Z M750.6 192.0 C752.1 194.2 757.2 200.9 759.8 205.3 C762.3 209.7 765.0 214.5 765.9 218.6 C766.8 222.7 765.9 226.1 764.9 229.8 C763.9 233.5 762.0 237.3 759.8 241.0 C757.6 244.7 753.0 250.0 751.6 251.8 L735.3 241.0 C737.0 239.7 742.6 236.1 745.5 232.9 C748.4 229.7 751.2 225.2 752.7 221.6 C754.2 218.0 754.5 214.8 754.7 211.4 C754.9 208.0 754.4 204.4 753.7 201.2 C753.0 198.0 751.1 193.5 750.6 192.0 Z M649.3 281.5 L684.6 267.8 L711.8 278.6 L682 292.7 Z M657.8 348.6 L680 340.6 L698.6 349.6 L678.5 357.4 Z M669 388 L679.5 385.8 L682 394.8 Z M780.5 285 L783.4 294 L773.6 307.5 L776.3 296.5 Z M728.6 320 L751.6 306.7 L760.8 318 L740.4 331.8 Z M702.7 379.4 L715.9 375.1 L715.3 382.2 L700.6 388.4 Z M716.5 381.8 C726 376 738 365 750.6 357.8 L745.5 367 L737.3 370.3 C730 374.5 723 378.5 716.5 381.8 Z" fill="#fff"/>
<path d="M683.0 157.5 C684.2 157.8 685.8 158.1 690.4 159.4 C695.0 160.7 705.0 163.3 710.8 165.5 C716.6 167.7 720.7 170.3 725.1 172.7 C729.5 175.1 733.5 177.2 737.3 179.8 C741.0 182.4 744.2 185.1 747.6 188.0 C751.0 190.9 754.8 193.9 757.8 197.1 C760.8 200.3 763.5 204.1 765.9 207.3 C768.3 210.5 770.0 213.3 772.0 216.5 C774.0 219.7 776.3 223.1 778.2 226.7 C780.1 230.3 781.8 233.9 783.3 238.0 C784.8 242.1 786.2 246.8 787.3 251.2 C788.4 255.6 789.4 259.7 790.0 264.5 C790.6 269.3 790.9 274.7 790.8 280.0 C790.7 285.3 790.1 291.4 789.4 296.5 C788.6 301.6 787.7 306.1 786.3 310.8 C784.9 315.6 783.2 320.2 781.2 325.0 C779.2 329.8 776.5 335.0 774.0 339.4 C771.5 343.8 768.9 347.7 765.9 351.6 C762.9 355.5 759.1 359.5 755.7 362.9 C752.3 366.3 749.2 368.9 745.5 372.0 C741.8 375.1 737.7 378.3 733.3 381.2 C728.9 384.1 724.1 386.8 719.0 389.4 C713.9 391.9 707.5 394.7 702.7 396.5 C697.9 398.3 693.8 399.2 690.4 400.2 C687.0 401.1 683.6 401.9 682.2 402.2 L681.6 157.5 Z" fill="none" stroke="#4a8be0" stroke-width="0.8"/>
<rect x="681.600" y="156.500" width="109" height="245.700" fill="none" stroke="#4a8be0" stroke-width="1"/>
<rect x="679.1" y="154.0" width="5" height="5" fill="#fff" stroke="#4a8be0" stroke-width="1"/><rect x="733.2" y="154.0" width="5" height="5" fill="#fff" stroke="#4a8be0" stroke-width="1"/><rect x="788.1" y="154.0" width="5" height="5" fill="#fff" stroke="#4a8be0" stroke-width="1"/><rect x="679.1" y="276.7" width="5" height="5" fill="#fff" stroke="#4a8be0" stroke-width="1"/><rect x="788.1" y="276.7" width="5" height="5" fill="#fff" stroke="#4a8be0" stroke-width="1"/><rect x="679.1" y="399.7" width="5" height="5" fill="#fff" stroke="#4a8be0" stroke-width="1"/><rect x="733.2" y="399.7" width="5" height="5" fill="#fff" stroke="#4a8be0" stroke-width="1"/><rect x="788.1" y="399.7" width="5" height="5" fill="#fff" stroke="#4a8be0" stroke-width="1"/>
<ellipse cx="921" cy="584.500" rx="93" ry="22.500" fill="#0d89bf"/>
<text x="921" y="590.4" text-anchor="middle" font-family="'Liberation Sans',sans-serif" font-weight="bold" font-style="italic" font-size="17.3" fill="#fff" textLength="129" lengthAdjust="spacingAndGlyphs">Kadoshmerah</text>
</svg>
<svg class="a" style="left:678px;top:131px" width="144" height="324"><rect x="3.30" y="3.40" width="136.80" height="316.40" rx="0.5" fill="none" stroke="#e80c0c" stroke-width="2.6"/></svg>
<!--ART_E-->
<!--RIGHT_S-->
<svg class="a" style="left:980px;top:60px" width="300" height="440" viewBox="980 60 300 440">
<defs><linearGradient id="blu" x1="0" x2="0" y1="0" y2="1"><stop offset="0" stop-color="#9ec0e8"/><stop offset=".45" stop-color="#3f78c8"/><stop offset="1" stop-color="#2a5cad"/></linearGradient>
<radialGradient id="org" cx=".5" cy=".6" r=".6"><stop offset="0" stop-color="#f6a020"/><stop offset="1" stop-color="#e07c08"/></radialGradient></defs>
<!-- hidden panel below capas -->
<rect x="982" y="244" width="215.500" height="26" fill="#4d4d4d" stroke="#2b2b2b"/>
<path d="M992 250.500 h5 M992 253.500 h5 M992 256.500 h5" stroke="#d2d2d2" stroke-width="1.200"/><rect x="998.500" y="250" width="7" height="3.500" fill="none" stroke="#d2d2d2"/><rect x="998.500" y="255" width="7" height="3.500" fill="none" stroke="#d2d2d2"/>
<rect x="1022.500" y="251" width="3.500" height="9" fill="none" stroke="#d2d2d2"/><rect x="1029" y="251.500" width="4.500" height="4.500" fill="#d2d2d2"/><path d="M1027.500 248 v3" stroke="#d2d2d2" stroke-dasharray="1 1"/>
<rect x="1046.500" y="246" width="68" height="14" fill="#6a6a6a" stroke="#3a3a3a"/><rect x="1047" y="246.500" width="15" height="13" fill="#5a5a5a"/><path d="M1050.500 252 l4 -3.500 l4 3.500 Z M1050.500 254.500 l4 3.500 l4 -3.500 Z" fill="#777"/>
<path d="M1130.500 246 V268" stroke="#3a3a3a"/>
<rect x="1149.500" y="247.500" width="12" height="11" fill="none" stroke="#d2d2d2" stroke-width="1.200" stroke-dasharray="2 1.300"/><circle cx="1155.500" cy="253" r="2.800" fill="none" stroke="#d2d2d2" stroke-dasharray="1.500 1"/><path d="M1164.500 251.500 h7 l-3.500 4 Z" fill="#d2d2d2"/>
<!-- Capas -->
<rect x="982" y="68.500" width="228" height="179" rx="2" fill="#4d4d4d" stroke="#2b2b2b"/>
<path d="M982.500 71 Q982.500 69 984.500 69 H1207.500 Q1209.500 69 1209.500 71 V80 H982.500 Z" fill="#2f2f2f"/>
<rect x="982.500" y="80" width="227" height="16.500" fill="#383838"/>
<rect x="1020.500" y="80.500" width="86.500" height="16" fill="#414141"/><path d="M1107.500 80.500 V96.500" stroke="#2b2b2b"/>
<rect x="982.500" y="80" width="38" height="17" fill="#4d4d4d"/><path d="M1020.500 80 V96.500 M1020.500 96.500 H1209.500" stroke="#2b2b2b" fill="none"/>
<path d="M1186.500 71.800 L1183.500 74.500 L1186.500 77.200 Z M1190 71.800 L1187 74.500 L1190 77.200 Z" fill="#e0e0e0"/>
<path d="M1199 72 L1204.500 77.300 M1204.500 72 L1199 77.300" stroke="#e8e8e8" stroke-width="1.500"/>
<path d="M1192.500 87.500 h5 l-2.500 3 Z" fill="#d2d2d2"/><path d="M1198.500 86 H1206 M1198.500 89 H1206 M1198.500 92 H1206" stroke="#d2d2d2" stroke-width="1.400"/>
<rect x="986.500" y="98" width="218" height="123" fill="#484848" stroke="#2e2e2e"/>
<rect x="987" y="102.500" width="217" height="19" fill="#5d6778"/>
<path d="M1006.500 102.500 V121.500 M1026.500 102.500 V121.500 M1171.500 102.500 V121.500" stroke="#454f5e"/>
<path d="M987 102.500 H1204 M987 121.500 H1204" stroke="#3c4552" stroke-width=".8"/>
<rect x="1027" y="103" width="4" height="18" fill="#4f7fe0"/>
<path d="M1037.500 107.500 L1043 112 L1037.500 116.500 Z" fill="#f0f0f0"/>
<rect x="1052.500" y="104.500" width="16" height="15.500" fill="#fff" stroke="#1e1e1e"/><path d="M1054 108 a3 3.200 0 1 1 6 0 a3 3.200 0 1 1 -6 0" fill="#000"/><path d="M1057.500 105.200 l1.800 0 l0 1.200 Z" fill="#fff"/><rect x="1063" y="118" width="5" height="1.500" fill="#0b86bd"/>
<path d="M991.300 112 C993.500 108.500 999.500 108.500 1001.700 112 C999.500 115.500 993.500 115.500 991.300 112 Z" fill="none" stroke="#dcdcdc" stroke-width="1.100"/><circle cx="996.500" cy="111.800" r="1.700" fill="#dcdcdc"/>
<circle cx="1180.500" cy="112" r="3.600" fill="none" stroke="#b4b4b4" stroke-width="1"/>
<rect x="1191.300" y="109.300" width="5.400" height="5.400" fill="#4a7cf0" stroke="#16246a" stroke-width="1.300"/>
<path d="M1199 103 H1204 V108 Z" fill="#e4e4e4"/>
<circle cx="1082.500" cy="229.500" r="3.700" fill="none" stroke="#d2d2d2" stroke-width="1.300"/><path d="M1080 232.500 L1076.500 236.500" stroke="#d2d2d2" stroke-width="1.800"/>
<rect x="1100.500" y="226.500" width="7" height="7" fill="none" stroke="#d2d2d2" stroke-width="1.100"/><rect x="1103.500" y="229.500" width="6.500" height="6.500" fill="#8a8a8a" stroke="#d2d2d2" stroke-width="1"/>
<path d="M1123.500 227.500 l2 2 M1125.500 227.500 v2 h-2" stroke="#d2d2d2" stroke-width="1" fill="none"/><path d="M1127.500 227 H1136 V236 H1133 V230 H1127.500 Z" fill="#d2d2d2"/>
<path d="M1149.500 227 H1159 V236.500 H1155 V231 H1149.500 Z" fill="#d2d2d2"/>
<g stroke="#686868" fill="none" stroke-width="1"><path d="M1174.500 229.500 h8 M1177 229.500 v-1.500 h3 v1.500"/><rect x="1175.500" y="230.500" width="6" height="6.500"/><path d="M1177.500 231.500 v4.500 M1179.500 231.500 v4.500"/></g>
<path d="M1206 232 v1 m-2 1 h2.500 m-4.500 2 h4.500 m-6.500 2 h6.500" stroke="#2a2a2a" stroke-width="1" stroke-dasharray="1 1"/>
<rect x="982.500" y="240.500" width="227" height="6.500" fill="#383838"/><path d="M982.500 240.500 H1209.500" stroke="#2b2b2b"/>
<path d="M1087.5 242 V245.5 M1089.5 242 V245.5 M1091.5 242 V245.5 M1093.5 242 V245.5 M1095.5 242 V245.5 M1097.5 242 V245.5 M1099.5 242 V245.5 M1101.5 242 V245.5 M1103.5 242 V245.5" stroke="#1c1c1c" stroke-width="1"/>
<!-- Simbolos -->
<rect x="991.500" y="302" width="236" height="191" rx="2" fill="#4d4d4d" stroke="#2b2b2b"/>
<path d="M992 304.500 Q992 302.500 994 302.500 H1225 Q1227 302.500 1227 304.500 V314.500 H992 Z" fill="#2f2f2f"/>
<rect x="992" y="314.500" width="235" height="16.500" fill="#383838"/>
<rect x="992" y="315" width="54" height="16" fill="#414141"/>
<rect x="1046.500" y="314.500" width="54" height="17" fill="#4d4d4d"/><path d="M1046.500 314.500 V331 M1100.500 314.500 V331 M992 331 H1046.500 M1100.500 331 H1227" stroke="#2b2b2b" fill="none"/>
<path d="M1205.300 306 L1202.300 308.700 L1205.300 311.400 Z M1208.800 306 L1205.800 308.700 L1208.800 311.400 Z" fill="#e0e0e0"/>
<path d="M1218.300 306 L1223.800 311.300 M1223.800 306 L1218.300 311.300" stroke="#e8e8e8" stroke-width="1.500"/>
<path d="M1211 321 h5 l-2.500 3 Z" fill="#d2d2d2"/><path d="M1217 319.500 H1224.500 M1217 322.500 H1224.500 M1217 325.500 H1224.500" stroke="#d2d2d2" stroke-width="1.400"/>
<rect x="997" y="336.500" width="226.500" height="130.500" fill="#484848" stroke="#2e2e2e"/>
<rect x="1212" y="337" width="11" height="129.500" fill="#404040"/><path d="M1211.500 337 V466.500" stroke="#3a3a3a"/>
<path d="M1214 346 h7 l-3.500 -4.500 Z M1214 458 h7 l-3.500 4.500 Z" fill="#9c9c9c"/>
<rect x="998" y="338" width="29.500" height="29" fill="#e4e4e4"/><rect x="1000" y="346" width="25.500" height="13" fill="url(#blu)"/><rect x="1029" y="338" width="29.500" height="29" fill="#e4e4e4"/><path d="M1041 345 C1044 342 1048 345 1047 349 C1050 348 1052 351 1049.5 353.5 C1052 356 1051 360 1048 360 C1048.5 364 1044 365 1042.5 361.5 C1040 362.5 1038.5 360 1040 357.5 C1036 357.5 1035 353 1038.5 351.5 C1036.5 348.5 1038 345 1041 345 Z" fill="#000"/><circle cx="1043" cy="341.8" r="1.700" fill="#000"/><circle cx="1052.5" cy="343.8" r="2" fill="#000"/><circle cx="1034.5" cy="349.3" r="2.200" fill="#000"/><circle cx="1036" cy="361.5" r="2.400" fill="#000"/><circle cx="1049.5" cy="347" r="1.300" fill="#000"/><circle cx="1032.5" cy="363.5" r=".900" fill="#000"/><circle cx="1050.5" cy="363" r="1.100" fill="#000"/><rect x="1060" y="338" width="29.500" height="29" fill="#e4e4e4"/><circle cx="1074.7" cy="352.5" r="12.500" fill="url(#org)" stroke="#f0a040" stroke-width="1.500"/><path d="M1065 351 A10 9 0 0 1 1084.5 351 Q1074.7 354 1065 351 Z" fill="#fbd08a" opacity=".75"/><rect x="1091" y="338" width="29.500" height="29" fill="#e4e4e4"/><path d="M1095 341 V354" stroke="#333" stroke-width="2"/><path d="M1095 344 V347" stroke="#d33" stroke-width="2"/><path d="M1095 348 V351" stroke="#4a4" stroke-width="2"/><path d="M1098 342 L1107 341.3 L1098 340.8 Z" fill="#222"/><path d="M1115 340.5 v4 m-2 -2 h4 M1095 361 l3 3 M1116 361 l-3 3 M1096 363 h3 M1115 363 h-3" stroke="#555" stroke-width=".8" fill="none"/><rect x="1122" y="338" width="29.500" height="29" fill="#e4e4e4"/><path d="M1136.7 341.5 L1144.5 344.5 L1148 352.5 L1144.5 360.5 L1136.7 363.5 L1129 360.5 L1125.5 352.5 L1129 344.5 Z" fill="none" stroke="#6e6e6e" stroke-width="3.600" stroke-linejoin="round"/><circle cx="1136.7" cy="352.5" r="10.300" fill="none" stroke="#3c3c3c" stroke-width="1.200" stroke-dasharray="2 1.600"/><rect x="1153" y="338" width="29.500" height="29" fill="#e4e4e4"/><ellipse cx="1167.7" cy="345" rx="1.900" ry="6.500" fill="#e8776a" transform="rotate(0 1167.7 352.5)"/><ellipse cx="1167.7" cy="345" rx="1.900" ry="6.500" fill="#e8776a" transform="rotate(20 1167.7 352.5)"/><ellipse cx="1167.7" cy="345" rx="1.900" ry="6.500" fill="#e8776a" transform="rotate(40 1167.7 352.5)"/><ellipse cx="1167.7" cy="345" rx="1.900" ry="6.500" fill="#e8776a" transform="rotate(60 1167.7 352.5)"/><ellipse cx="1167.7" cy="345" rx="1.900" ry="6.500" fill="#e8776a" transform="rotate(80 1167.7 352.5)"/><ellipse cx="1167.7" cy="345" rx="1.900" ry="6.500" fill="#e8776a" transform="rotate(100 1167.7 352.5)"/><ellipse cx="1167.7" cy="345" rx="1.900" ry="6.500" fill="#e8776a" transform="rotate(120 1167.7 352.5)"/><ellipse cx="1167.7" cy="345" rx="1.900" ry="6.500" fill="#e8776a" transform="rotate(140 1167.7 352.5)"/><ellipse cx="1167.7" cy="345" rx="1.900" ry="6.500" fill="#e8776a" transform="rotate(160 1167.7 352.5)"/><ellipse cx="1167.7" cy="345" rx="1.900" ry="6.500" fill="#e8776a" transform="rotate(180 1167.7 352.5)"/><ellipse cx="1167.7" cy="345" rx="1.900" ry="6.500" fill="#e8776a" transform="rotate(200 1167.7 352.5)"/><ellipse cx="1167.7" cy="345" rx="1.900" ry="6.500" fill="#e8776a" transform="rotate(220 1167.7 352.5)"/><ellipse cx="1167.7" cy="345" rx="1.900" ry="6.500" fill="#e8776a" transform="rotate(240 1167.7 352.5)"/><ellipse cx="1167.7" cy="345" rx="1.900" ry="6.500" fill="#e8776a" transform="rotate(260 1167.7 352.5)"/><ellipse cx="1167.7" cy="345" rx="1.900" ry="6.500" fill="#e8776a" transform="rotate(280 1167.7 352.5)"/><ellipse cx="1167.7" cy="345" rx="1.900" ry="6.500" fill="#e8776a" transform="rotate(300 1167.7 352.5)"/><ellipse cx="1167.7" cy="345" rx="1.900" ry="6.500" fill="#e8776a" transform="rotate(320 1167.7 352.5)"/><ellipse cx="1167.7" cy="345" rx="1.900" ry="6.500" fill="#e8776a" transform="rotate(340 1167.7 352.5)"/><circle cx="1167.7" cy="352.5" r="3.600" fill="#e6b84a"/><circle cx="1167.7" cy="352.5" r="1.800" fill="#c9902a"/><rect x="998" y="368.5" width="29.500" height="30" rx="1.500" fill="#f2f2f2"/><rect x="999.2" y="369.7" width="27.100" height="27.600" fill="#1a1a1a"/><rect x="1000.4" y="370.9" width="24.700" height="8" fill="#e9e9e9"/><rect x="1000.4" y="387.3" width="24.700" height="8.800" fill="#e9e9e9"/><rect x="1000.4" y="381.5" width="24.700" height="1.300" fill="#666"/><rect x="1000.4" y="384.5" width="24.700" height="1" fill="#555"/>
<!-- footer icons -->
<path d="M1000.500 472 V481 M1003 472 V481 M1005.500 472.500 L1009.500 481" stroke="#d2d2d2" stroke-width="1.300"/><path d="M1011 479.500 h5 l-2.500 2.800 Z" fill="#d2d2d2"/>
<path d="M1090.500 472 V477.500 H1097 M1094.500 474.500 L1098 477.500 L1094.500 480.500 Z" stroke="#d2d2d2" stroke-width="1.500" fill="#d2d2d2"/>
<g stroke="#6c6c6c" fill="none" stroke-width="1.100" stroke-dasharray="1.800 1"><path d="M1118 474.500 h-3 a2.500 2.500 0 0 0 0 5 h3 M1122 474.500 h3 a2.500 2.500 0 0 1 0 5 h-3"/><path d="M1120 471.500 v2.500 M1120 480.500 v2.500"/></g>
<rect x="1138.500" y="472" width="9.500" height="8.500" fill="none" stroke="#d2d2d2" stroke-width="1.100"/><path d="M1140.500 474.500 h5.500 M1140.500 476.500 h5.500 M1140.500 478.500 h5.500" stroke="#d2d2d2" stroke-width=".9"/>
<path d="M1163.500 472 H1173 V481.500 H1169 V476 H1163.500 Z" fill="#d2d2d2"/>
<g stroke="#d2d2d2" fill="none" stroke-width="1.100"><path d="M1187.500 474 h9 M1190 474 v-1.800 h4 v1.800"/><path d="M1188.500 475.500 h7 l-.6 6.500 h-5.800 Z"/><path d="M1190.800 476.500 v4.500 M1193.200 476.500 v4.500"/></g>
<path d="M1224 478 v1 m-2 1 h2.500 m-4.500 2 h4.500 m-6.500 2 h6.500" stroke="#2a2a2a" stroke-width="1" stroke-dasharray="1 1"/>
<rect x="992" y="485.500" width="235" height="7" fill="#383838"/><path d="M992 485.500 H1227" stroke="#2b2b2b"/>
<path d="M1101.5 487.2 V490.5 M1103.5 487.2 V490.5 M1105.5 487.2 V490.5 M1107.5 487.2 V490.5 M1109.5 487.2 V490.5 M1111.5 487.2 V490.5 M1113.5 487.2 V490.5 M1115.5 487.2 V490.5 M1117.5 487.2 V490.5" stroke="#1c1c1c" stroke-width="1"/>
<!-- dock -->
<rect x="1246" y="60" width="34" height="12" fill="#2f2f2f"/>
<rect x="1246" y="72" width="34" height="428" fill="#484848"/>
<path d="M1246 72.500 H1280" stroke="#5c5c5c"/><path d="M1246 162.500 H1280" stroke="#2e2e2e"/><path d="M1246 163.500 H1280" stroke="#585858"/>
<path d="M1273 63.300 L1270 66 L1273 68.700 Z M1276.500 63.300 L1273.500 66 L1276.500 68.700 Z" fill="#e0e0e0"/>
<path d="M1253.5 75.3 V78.5 M1255.5 75.3 V78.5 M1257.5 75.3 V78.5 M1259.5 75.3 V78.5 M1261.5 75.3 V78.5 M1263.5 75.3 V78.5 M1265.5 75.3 V78.5 M1267.5 75.3 V78.5 M1269.5 75.3 V78.5 M1271.5 75.3 V78.5" stroke="#1e1e1e" stroke-width="1"/>
<g fill="none" stroke="#cfcfcf" stroke-width="1.700"><path d="M1259.500 99.500 C1253 99.500 1252.500 91.500 1258 90.300 C1259.500 86.500 1265.500 86.300 1267.500 89.600 C1272.500 88.800 1275 95 1271.500 97.800 C1270 99.300 1268 99.500 1266.500 99.500 Z"/><path d="M1258 95.500 C1258.500 92 1262.500 91.800 1264.500 94.300 L1267 97.300 M1269.500 93.500 C1269 96.500 1265.500 97.300 1263.500 95 L1261 92"/></g>
<circle cx="1263.300" cy="120" r="5.300" fill="#c4c4c4"/><circle cx="1263.300" cy="120" r="7.800" fill="none" stroke="#d8d8d8" stroke-width="1.300" stroke-dasharray="2 1.500"/>
<path d="M1259 141.500 V139.500 H1271.500 V152 H1266" fill="none" stroke="#d0d0d0" stroke-width="1.500"/><rect x="1255.500" y="145" width="6" height="6" fill="#4b4b4b" stroke="#d0d0d0" stroke-width="1.100"/><rect x="1258.500" y="148" width="5.500" height="5.500" fill="#8a8a8a" stroke="#d0d0d0" stroke-width="1.100"/>
</svg>
<div class="t" style="left:988.5px;top:82px;font-size:9.6px;font-weight:bold;color:#ececec;letter-spacing:-0.86px;">Capas</div>
<div class="t" style="left:1027.0px;top:82px;font-size:9.6px;font-weight:bold;color:#9a9a9a;letter-spacing:-0.30px;">Mesas de trabajo</div>
<div class="t" style="left:1073.8px;top:105.500px;font-size:9.6px;font-weight:bold;color:#f0f0f0;letter-spacing:-0.54px;">Capa 1</div>
<div class="t" style="left:986.6px;top:225.500px;font-size:9.6px;font-weight:bold;color:#e4e4e4;letter-spacing:-0.45px;">1 capa</div>
<div class="t" style="left:1065px;top:246.500px;font-size:10px;color:#9a9a9a;">0 mm</div>
<div class="t" style="left:999.0px;top:316px;font-size:9.6px;font-weight:bold;color:#9a9a9a;letter-spacing:-0.39px;">Muestras</div>
<div class="t" style="left:1053.0px;top:316px;font-size:9.6px;font-weight:bold;color:#ececec;letter-spacing:-0.31px;">Símbolos</div>
<!--RIGHT_E-->
<!--BOTTOM_S-->
<div class="a" style="left:70px;top:667px;width:1175px;height:14px;background:#4b4b4b;border-top:1px solid #333;box-sizing:border-box;"></div>
<div class="a" style="left:524px;top:667px;width:703px;height:14px;background:#383838;"></div>
<div class="a" style="left:1227px;top:80px;width:15px;height:587px;background:#383838;"></div>
<div class="a" style="left:1242px;top:60px;width:4px;height:626px;background:#323232;"></div>
<svg class="a" style="left:70px;top:667px" width="130" height="14" viewBox="70 667 130 14">
<g fill="#6a6a6a"><path d="M76 671 h6 l-2 -2 M82 671 l-2 2" stroke="#6a6a6a" fill="none"/><rect x="76" y="675" width="4" height="4"/><circle cx="86" cy="677" r="2.500" fill="none" stroke="#6a6a6a"/><path d="M84 673 h6" stroke="#6a6a6a"/></g>
<path d="M104 672.500 V679.500 H113 V676" fill="none" stroke="#d8d8d8" stroke-width="1.300"/><path d="M108 677 C108 673 110 671.500 113 671.500 M113 671.500 L111 669.500 M113 671.500 L111 673.500" fill="none" stroke="#d8d8d8" stroke-width="1.400"/><path d="M111.500 668.500 L116 671.500 L111.500 674.500 Z" fill="#d8d8d8"/>
<rect x="127.500" y="668.500" width="48" height="13" fill="#a6a6a6" stroke="#2c2c2c"/>
<rect x="175.500" y="668.500" width="14" height="13" fill="#5f5f5f" stroke="#2c2c2c"/>
<path d="M179 672.500 L186 672.500 L182.500 677 Z" fill="#e0e0e0"/>
</svg>
<div class="t" style="left:130.0px;top:670.5px;font-size:10px;color:#111;letter-spacing:-0.80px;">100%</div>
<div class="a" style="left:532px;top:670px;width:0;height:0;border-right:5px solid #e6e6e6;border-top:4.500px solid transparent;border-bottom:4.500px solid transparent;"></div>
<div class="a" style="left:868.5px;top:668px;width:13.5px;height:12px;background:#9a9a9a;"></div>
<div class="a" style="left:1216px;top:670px;width:0;height:0;border-left:6px solid #e6e6e6;border-top:4.500px solid transparent;border-bottom:4.500px solid transparent;"></div>
<div class="a" style="left:1230px;top:85px;width:0;height:0;border-bottom:5.5px solid #e6e6e6;border-left:5.5px solid transparent;border-right:5.5px solid transparent;"></div>
<div class="a" style="left:1230px;top:654.5px;width:0;height:0;border-top:6px solid #e6e6e6;border-left:5.500px solid transparent;border-right:5.500px solid transparent;"></div>
<div class="a" style="left:1229px;top:363px;width:12px;height:16px;background:#9a9a9a;"></div>
<div class="a" style="left:0;top:681px;width:1280px;height:5px;background:#222;"></div>
<div class="a" style="left:0;top:682px;width:114px;height:4px;background:linear-gradient(90deg,#1f2a30,#5a8aa8 20%,#2a3a44 32%,#242424 60%);"></div>
<div class="a" style="left:114px;top:683px;width:55px;height:3px;background:#a4a4a4;border-radius:2px 2px 0 0;"></div>
<div class="a" style="left:172.500px;top:683px;width:53.500px;height:3px;background:linear-gradient(90deg,#d8d49a 0 25%,#a4a4a4 30%);border-radius:2px 2px 0 0;"></div>
<div class="a" style="left:289px;top:683px;width:53px;height:3px;background:#a4a4a4;border-radius:2px 2px 0 0;"></div>
<div class="a" style="left:347px;top:683px;width:53px;height:3px;background:#b4b4b4;border-radius:2px 2px 0 0;"></div>
<div class="a" style="left:500px;top:683px;width:412px;height:3px;background:linear-gradient(90deg,#222,#1f7a9a 8%,#2a9cc4 30%,#2590b6 60%,#33a6cf 90%,#2a7a98);"></div>
<div class="a" style="left:1270px;top:683px;width:10px;height:3px;background:#8a8a8a;"></div>
<!--BOTTOM_E-->
<!--MENU_S-->
<div class="a" id="menu">
<div class="a gut"></div>
<div class="mi" style="top:4.9px;letter-spacing:-0.09px;">Transformar</div>
<div class="arr" style="top:8.4px"></div>
<div class="mi" style="top:25.7px;letter-spacing:-0.26px;">Organizar</div>
<div class="arr" style="top:29.2px"></div>
<div class="sep" style="top:47.1px"></div>
<div class="mi" style="top:53.9px;letter-spacing:0.04px;">Agrupar</div>
<div class="sc" style="top:53.9px">Ctrl+G</div>
<div class="mi d" style="top:74.3px;letter-spacing:-0.33px;">Desagrupar</div>
<div class="sc d" style="top:74.3px">Mayúsculas+Ctrl+G</div>
<div class="mi" style="top:95.1px;letter-spacing:-0.23px;">Bloquear</div>
<div class="arr" style="top:98.6px"></div>
<div class="mi d" style="top:115.4px;letter-spacing:-0.13px;">Desbloquear todo</div>
<div class="sc d" style="top:115.4px">Alt+Ctrl+2</div>
<div class="mi" style="top:136.2px;letter-spacing:0.01px;">Ocultar</div>
<div class="arr" style="top:139.7px"></div>
<div class="mi d" style="top:156.5px;letter-spacing:0.05px;">Mostrar todo</div>
<div class="sc d" style="top:156.5px">Alt+Ctrl+3</div>
<div class="sep" style="top:177.9px"></div>
<div class="mi d" style="top:185.3px;letter-spacing:-0.24px;">Expandir...</div>
<div class="a" id="hl" style="top:203.6px"></div>
<div class="mi" style="top:206.1px;letter-spacing:-0.29px;">Expandir apariencia</div>
<div class="mi" style="top:226.4px;letter-spacing:-0.47px;">Rasterizar...</div>
<div class="mi" style="top:247.2px;letter-spacing:-0.22px;">Crear malla de degradado...</div>
<div class="mi d" style="top:267.5px;letter-spacing:-0.20px;">Crear mosaico de objetos...</div>
<div class="mi" style="top:288.3px;letter-spacing:-0.17px;">Acoplar transparencia...</div>
<div class="sep" style="top:309.5px"></div>
<div class="mi" style="top:316.5px;letter-spacing:-0.34px;">Sector</div>
<div class="arr" style="top:320.0px"></div>
<div class="mi" style="top:336.8px;letter-spacing:-0.21px;">Crear marcas de límite</div>
<div class="sep" style="top:358.2px"></div>
<div class="mi" style="top:365.1px;letter-spacing:-0.37px;">Trazado</div>
<div class="arr" style="top:368.6px"></div>
<div class="mi" style="top:385.4px;letter-spacing:-0.30px;">Forma</div>
<div class="arr" style="top:388.9px"></div>
<div class="mi" style="top:406.2px;letter-spacing:0.29px;">Motivo</div>
<div class="arr" style="top:409.7px"></div>
<div class="mi" style="top:426.5px;letter-spacing:-0.30px;">Fusión</div>
<div class="arr" style="top:430.0px"></div>
<div class="mi" style="top:447.3px;letter-spacing:-0.11px;">Distorsión de envolvente</div>
<div class="arr" style="top:450.8px"></div>
<div class="mi" style="top:468.1px;letter-spacing:-0.30px;">Perspectiva</div>
<div class="arr" style="top:471.6px"></div>
<div class="mi" style="top:488.5px;letter-spacing:-0.07px;">Pintura interactiva</div>
<div class="arr" style="top:492.0px"></div>
<div class="mi" style="top:509.3px;letter-spacing:-0.14px;">Calco de imagen</div>
<div class="arr" style="top:512.8px"></div>
<div class="mi" style="top:529.5px;letter-spacing:-0.17px;">Ceñir texto</div>
<div class="arr" style="top:533.0px"></div>
<div class="mi" style="top:550.4px;letter-spacing:-0.19px;">Ilustración de Line and Sketch</div>
<div class="arr" style="top:553.9px"></div>
<div class="sep" style="top:571.8px"></div>
<div class="mi" style="top:578.5px;letter-spacing:-0.24px;">Máscara de recorte</div>
<div class="arr" style="top:582.0px"></div>
<div class="mi" style="top:599.5px;letter-spacing:-0.14px;">Trazado compuesto</div>
<div class="arr" style="top:603.0px"></div>
<div class="mi" style="top:619.8px;letter-spacing:-0.25px;">Mesas de trabajo</div>
<div class="arr" style="top:623.3px"></div>
<div class="mi" style="top:640.5px;letter-spacing:-0.33px;">Gráfica</div>
<div class="arr" style="top:644.0px"></div>
</div>
<!--MENU_E-->
<svg class="a" style="left:138px;top:0px" width="62" height="28"><rect x="4.00" y="3.90" width="53.90" height="20.70" rx="1.5" fill="none" stroke="#dc0e0e" stroke-width="2.8"/></svg>
<svg class="a" style="left:193px;top:222px" width="334" height="27"><rect x="3.35" y="3.75" width="326.90" height="19.90" rx="1" fill="none" stroke="#e80c0c" stroke-width="2.7"/></svg>
</body>
</html>
